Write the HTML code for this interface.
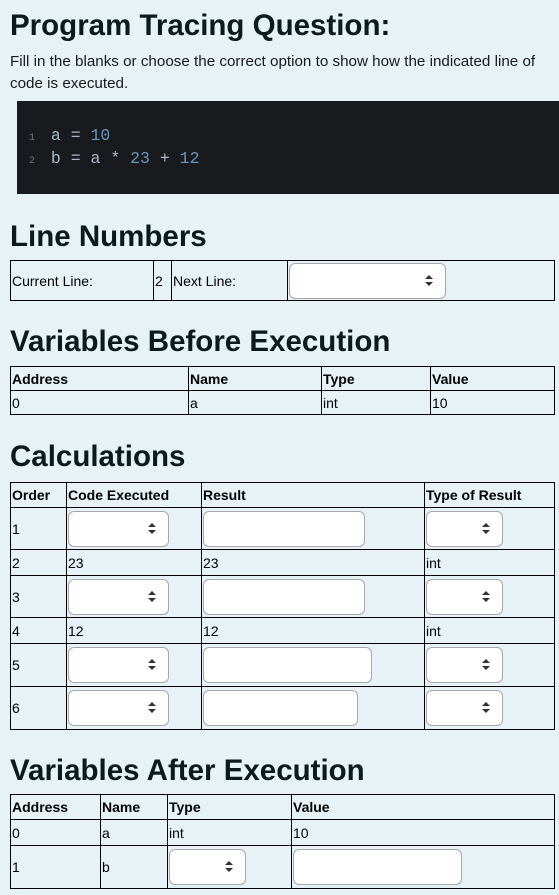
<!DOCTYPE html>
<html><head><meta charset="utf-8"><style>
body{margin:0;width:559px;height:895px;background:#e6f2f5;font-family:"Liberation Sans",sans-serif;color:#000;position:relative;overflow:hidden}
.a{position:absolute}
h1,h2{margin:0;position:absolute;left:10px;font-weight:bold;color:#0b1a1f;white-space:nowrap}
h1{font-size:29.5px;top:9px}
h2{font-size:29.5px}
p{margin:0;position:absolute;left:10px;top:51px;font-size:15.2px;line-height:22px;color:#1a1a1a;width:549px;white-space:nowrap}
.code{left:17px;top:101px;width:542px;height:93px;background:#181a1d;font-family:"Liberation Mono",monospace;font-size:16.5px;color:#a9b7c6}
.code div{position:absolute;left:12px;white-space:pre}
.code .n{color:#777;font-size:10px}
.code .b{color:#6897bb}
table{position:absolute;border-collapse:collapse;table-layout:fixed;left:10px;width:545px;font-size:14px}
td,th{border:1px solid #000;padding:0 1px;text-align:left;vertical-align:middle;overflow:hidden;white-space:nowrap}
th{font-weight:bold}
.sel,.inp{display:block;background:#fff;border:1px solid #a6a8ab;border-radius:6px;height:34px;box-sizing:border-box;position:relative}
.sel:after{content:"";position:absolute;right:12px;top:11px;border:4px solid transparent;border-bottom:4px solid #333;border-top:0}
.sel:before{content:"";position:absolute;right:12px;top:18px;border:4px solid transparent;border-top:4px solid #333;border-bottom:0}
</style></head><body>
<h1>Program Tracing Question:</h1>
<p>Fill in the blanks or choose the correct option to show how the indicated line of<br>code is executed.</p>
<div class="a code">
<div style="top:25px"><span class="n">1 </span> a = <span class="b">10</span></div>
<div style="top:48px"><span class="n">2 </span> b = a * <span class="b">23</span> + <span class="b">12</span></div>
</div>
<h2 style="top:220px">Line Numbers</h2>
<table style="top:260px"><colgroup><col style="width:143px"><col style="width:18px"><col style="width:116px"><col></colgroup>
<tr style="height:40px"><td>Current Line:</td><td>2</td><td>Next Line:</td><td><span class="sel" style="width:157px;height:36px"></span></td></tr></table>
<h2 style="top:325px">Variables Before Execution</h2>
<table style="top:366px"><colgroup><col style="width:178px"><col style="width:133px"><col style="width:109px"><col></colgroup>
<tr style="height:24px"><th>Address</th><th>Name</th><th>Type</th><th>Value</th></tr>
<tr style="height:24px"><td>0</td><td>a</td><td>int</td><td>10</td></tr></table>
<h2 style="top:440px">Calculations</h2>
<table style="top:482px"><colgroup><col style="width:56px"><col style="width:135px"><col style="width:223px"><col></colgroup>
<tr style="height:25px"><th>Order</th><th>Code Executed</th><th>Result</th><th>Type of Result</th></tr>
<tr style="height:42px"><td>1</td><td><span class="sel" style="width:101px;height:36px"></span></td><td><span class="inp" style="width:162px;height:36px"></span></td><td><span class="sel" style="width:77px;height:36px"></span></td></tr>
<tr style="height:26px"><td>2</td><td>23</td><td>23</td><td>int</td></tr>
<tr style="height:42px"><td>3</td><td><span class="sel" style="width:101px;height:36px"></span></td><td><span class="inp" style="width:162px;height:36px"></span></td><td><span class="sel" style="width:77px;height:36px"></span></td></tr>
<tr style="height:26px"><td>4</td><td>12</td><td>12</td><td>int</td></tr>
<tr style="height:43px"><td>5</td><td><span class="sel" style="width:101px;height:36px"></span></td><td><span class="inp" style="width:169px;height:36px"></span></td><td><span class="sel" style="width:77px;height:36px"></span></td></tr>
<tr style="height:43px"><td>6</td><td><span class="sel" style="width:101px;height:36px"></span></td><td><span class="inp" style="width:155px;height:36px"></span></td><td><span class="sel" style="width:77px;height:36px"></span></td></tr>
</table>
<h2 style="top:754px">Variables After Execution</h2>
<table style="top:794px"><colgroup><col style="width:90px"><col style="width:67px"><col style="width:124px"><col></colgroup>
<tr style="height:25px"><th>Address</th><th>Name</th><th>Type</th><th>Value</th></tr>
<tr style="height:26px"><td>0</td><td>a</td><td>int</td><td>10</td></tr>
<tr style="height:43px"><td>1</td><td>b</td><td><span class="sel" style="width:77px;height:36px"></span></td><td><span class="inp" style="width:169px;height:36px"></span></td></tr>
</table>
</body></html>
